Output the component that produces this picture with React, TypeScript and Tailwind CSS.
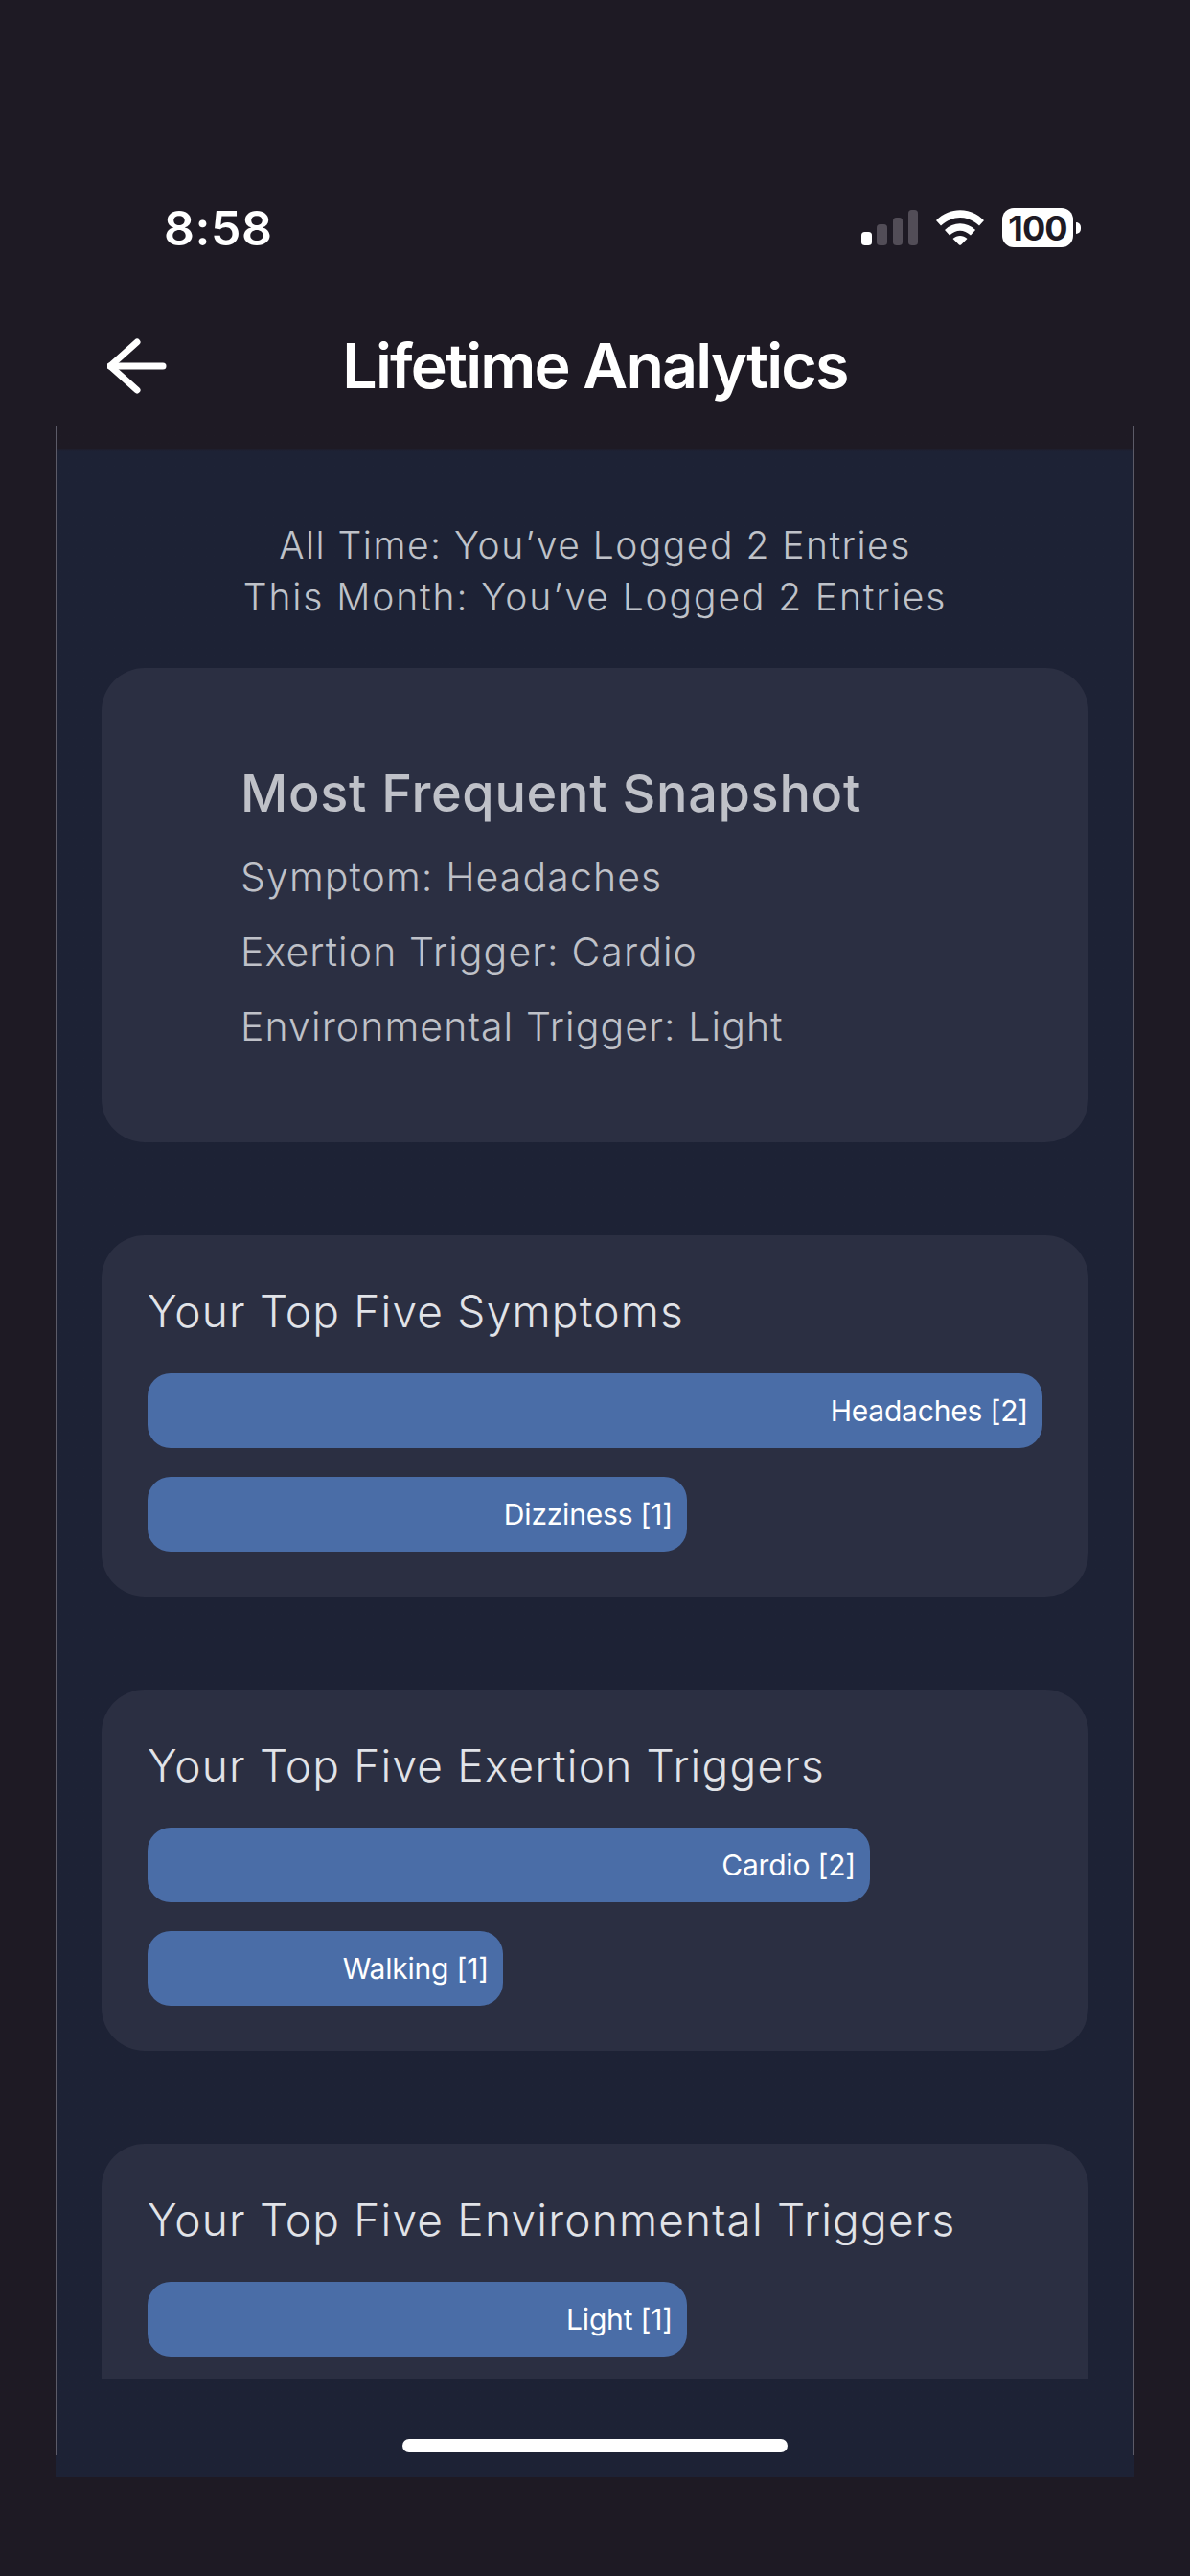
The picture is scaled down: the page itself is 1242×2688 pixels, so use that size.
const grotesk = "font-['Inter','Liberation_Sans',sans-serif]";

function Bar({ label, width }: { label: string; width: string }) {
  return (
    <div className={`flex h-[78px] items-center justify-end rounded-[24px] bg-[#4a6da7] pr-[15px] text-[30px] tracking-[-0.2px] text-white ${width}`}>
      {label}
    </div>
  );
}

function BarCard({ title, children }: { title: string; children: React.ReactNode }) {
  return (
    <section className="mb-[97px] flex flex-col gap-[33px] rounded-[45px] bg-[#2b2f42] px-[48px] pb-[47px] pt-[47px]">
      <h2 className="h-[64px] text-[46px] font-light leading-[64px] tracking-[1.2px] text-[#e1e3e8]">{title}</h2>
      {children}
    </section>
  );
}

function StatusIcons() {
  return (
    <div className="flex items-center gap-[19px]">
      <svg width="59" height="37" viewBox="0 0 59 37" className="block">
        <rect x="0" y="23" width="11" height="14" rx="3.500" fill="#fff" />
        <rect x="16" y="15" width="11" height="22" rx="3.500" fill="#524d57" />
        <rect x="33" y="8" width="10" height="29" rx="3.500" fill="#524d57" />
        <rect x="49" y="0" width="10" height="37" rx="3.500" fill="#524d57" />
      </svg>
      <svg width="50" height="37" viewBox="0 0 50 37" className="block">
        <path d="M0 11 C14 -3.500 36 -3.500 50 11 L45 16.500 C32 5 18 5 5 16.500 Z" fill="#fff" />
        <path d="M9 21 C18 12 32 12 41 21 L36 26.500 C29 20 21 20 14 26.500 Z" fill="#fff" />
        <path d="M17.500 30 C22 26 28 26 32.500 30 L26 36.500 Q25 37 24 36.500 Z" fill="#fff" />
      </svg>
      <div className="flex items-center gap-[3px]">
        <div className="flex h-[41px] w-[74px] items-center justify-center rounded-[12px] bg-white font-['Inter',sans-serif] text-[36px] font-bold leading-none tracking-[-0.8px] text-[#1e1a24]">
          100
        </div>
        <div className="h-[12px] w-[5px] rounded-r-full bg-white" />
      </div>
    </div>
  );
}

export default function App() {
  return (
    <div className={`flex h-[2688px] w-[1242px] flex-col overflow-hidden bg-[#1e1a24] ${grotesk}`}>
      <div className="flex h-[268px] shrink-0 items-end justify-between pl-[171px] pr-[114px]">
        <span className="text-[50px] font-semibold leading-[60px] tracking-[0.5px] text-white">8:58</span>
        <div className="pb-[10px]"><StatusIcons /></div>
      </div>
      <header className="relative flex h-[177px] shrink-0 items-center justify-center pt-[51px]">
        <svg width="62" height="62" viewBox="0 0 62 62" className="absolute left-[112px] top-[83px]" fill="none" stroke="#fff" strokeWidth="7" strokeLinecap="round" strokeLinejoin="round">
          <path d="M3 31H58" />
          <path d="M31 6L3 31L31 56" />
        </svg>
        <h1 className="text-[64.500px] font-semibold tracking-[-1.800px] text-white">Lifetime Analytics</h1>
      </header>
      <main className="mx-[58px] h-[2140px] bg-gradient-to-b from-[#1e1a24] from-[23px] to-[#1d2235] to-[26px]">
        <div className="flex h-[2117px] flex-col overflow-hidden border-x border-[#5c5b68] px-[47px] pt-[97px]">
          <div className="text-center text-[39px] font-light leading-[54px] tracking-[1.5px] text-[#bfc2c9]">
            <p>All Time: You’ve Logged 2 Entries</p>
            <p className="tracking-[1.9px]">This Month: You’ve Logged 2 Entries</p>
          </div>
          <section className="mb-[97px] mt-[47px] flex h-[495px] flex-col justify-center rounded-[45px] bg-[#2b2f42] pl-[145px] pt-[8px]">
            <h2 className="mb-[8px] text-[54px] font-medium leading-[80px] tracking-[0.7px] text-[#bfc1c8]">Most Frequent Snapshot</h2>
            <div className="text-[41px] font-light leading-[78px] tracking-[1.1px] text-[#bfc1c8]">
              <p>Symptom: Headaches</p>
              <p>Exertion Trigger: Cardio</p>
              <p>Environmental Trigger: Light</p>
            </div>
          </section>
          <BarCard title="Your Top Five Symptoms">
            <div className="flex flex-col gap-[30px]">
              <Bar label="Headaches [2]" width="w-full" />
              <Bar label="Dizziness [1]" width="w-[563px]" />
            </div>
          </BarCard>
          <BarCard title="Your Top Five Exertion Triggers">
            <div className="flex flex-col gap-[30px]">
              <Bar label="Cardio [2]" width="w-[754px]" />
              <Bar label="Walking [1]" width="w-[371px]" />
            </div>
          </BarCard>
          <div className="h-[245px] shrink-0 overflow-hidden rounded-t-[45px] bg-[#2b2f42] px-[48px] pt-[47px]">
            <h2 className="mb-[33px] h-[64px] text-[46px] font-light leading-[64px] tracking-[1.2px] text-[#e1e3e8]">Your Top Five Environmental Triggers</h2>
            <Bar label="Light [1]" width="w-[563px]" />
          </div>
          <div className="mt-[63px] h-[14px] w-[402px] shrink-0 self-center rounded-full bg-white" />
        </div>
      </main>
    </div>
  );
}
